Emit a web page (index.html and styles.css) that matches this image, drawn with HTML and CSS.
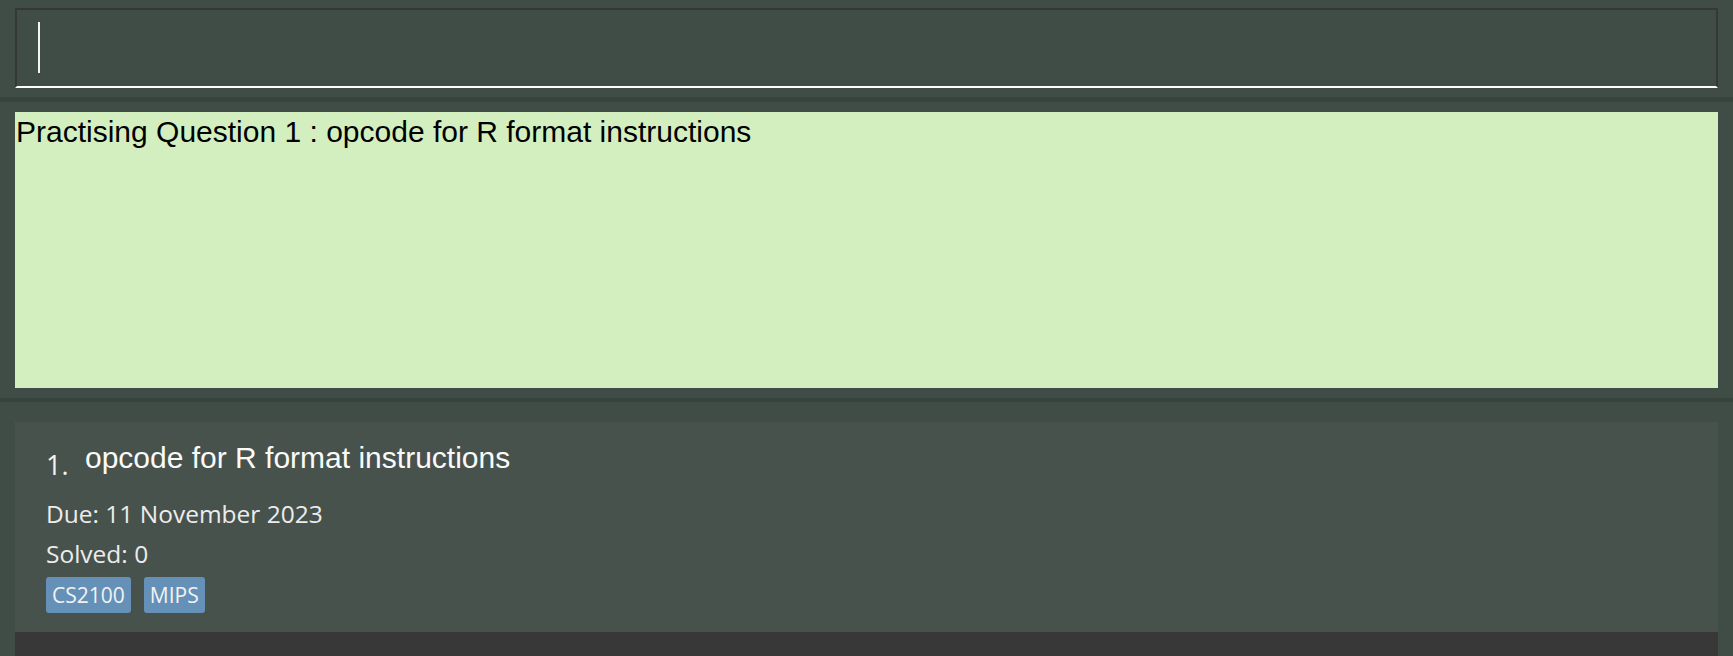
FILE: index.html
```html
<!DOCTYPE html>
<html lang="en">
<head>
<meta charset="utf-8">
<title>Practice</title>
<link rel="stylesheet" href="styles.css">
</head>
<body>
<div class="app">
  <section class="command">
    <div class="command-input"><span class="caret"></span></div>
  </section>
  <div class="divider divider-top"></div>
  <section class="result">
    <div class="result-box">Practising Question 1 : opcode for R format instructions</div>
  </section>
  <div class="divider divider-mid"></div>
  <section class="list">
    <div class="card">
      <div class="card-head">
        <span class="card-index">1.</span>
        <span class="card-title">opcode for R format instructions</span>
      </div>
      <div class="card-line card-due">Due: 11 November 2023</div>
      <div class="card-line card-solved">Solved: 0</div>
      <div class="tags">
        <span class="tag">CS2100</span>
        <span class="tag">MIPS</span>
      </div>
    </div>
    <div class="list-rest"></div>
  </section>
</div>
</body>
</html>
```
FILE: styles.css
```css
html, body {
  margin: 0;
  padding: 0;
}
body {
  background: #3f4d46;
  width: 1733px;
  height: 656px;
  overflow: hidden;
}
.app {
  display: flex;
  flex-direction: column;
  height: 656px;
}
.command {
  padding: 8px 15px 9px;
}
.command-input {
  box-sizing: border-box;
  height: 80px;
  border: 2px solid #353836;
  border-bottom: 2px solid #ffffff;
  padding: 12px 0 0 21px;
}
.caret {
  display: block;
  width: 2px;
  height: 51px;
  background: #f4f4f4;
}
.divider {
  background: #37443d;
}
.divider-top {
  height: 5px;
}
.divider-mid {
  height: 4px;
}
.result {
  padding: 10px 15px 10px;
}
.result-box {
  box-sizing: border-box;
  height: 276px;
  background: #d3efbf;
  color: #000;
  font-family: "Liberation Sans", Arial, sans-serif;
  font-size: 30px;
  padding: 3px 0 0 1px;
}
.list {
  flex: 1;
  display: flex;
  flex-direction: column;
  padding: 20px 15px 0;
}
.card {
  box-sizing: border-box;
  height: 210px;
  background: #48524c;
  padding: 18px 0 0 31px;
  color: #ececec;
}
.card-head {
  display: flex;
  align-items: flex-start;
  height: 54px;
}
.card-index {
  font-family: "Open Sans", "Noto Sans", sans-serif;
  font-size: 27px;
  line-height: 30px;
  margin-top: 10px;
  width: 39px;
  color: #f2f2f2;
}
.card-title {
  font-family: "Liberation Sans", Arial, sans-serif;
  font-size: 30px;
  line-height: 35px;
  color: #fafafa;
}
.card-line {
  font-family: "Open Sans", "Noto Sans", sans-serif;
  font-size: 24.5px;
  line-height: 40px;
}
.tags {
  display: flex;
  gap: 13px;
  margin-top: 3px;
}
.tag {
  font-family: "Open Sans", "Noto Sans", sans-serif;
  font-size: 21px;
  line-height: 36px;
  height: 36px;
  padding: 0 6px;
  background: #6591b8;
  color: #f2f2f2;
  border-radius: 3px;
}
.list-rest {
  flex: 1;
  background: #383838;
}
```
